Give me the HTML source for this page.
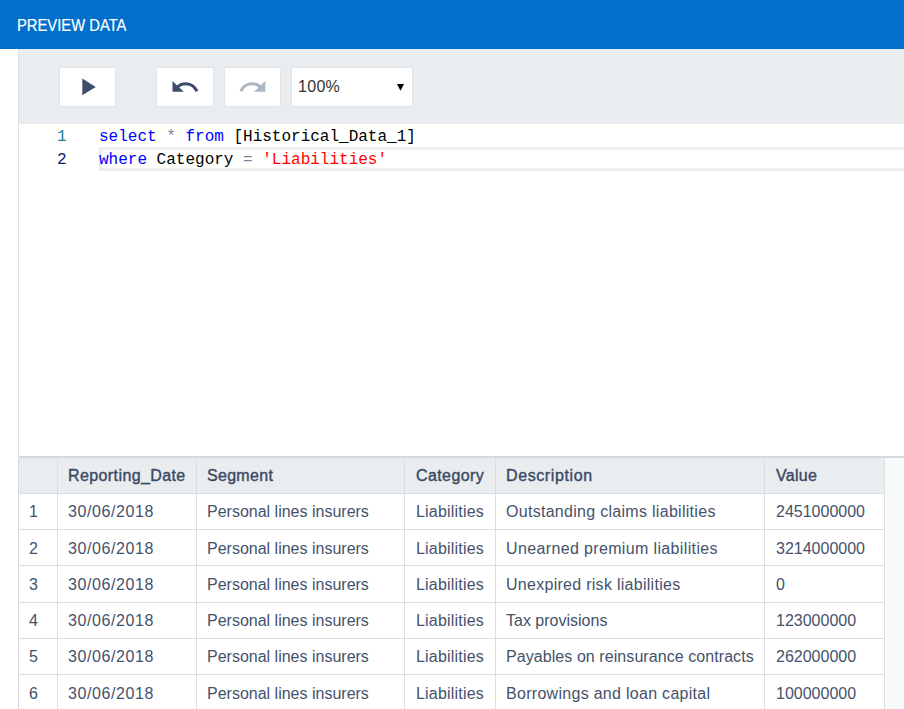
<!DOCTYPE html>
<html><head><meta charset="utf-8">
<style>
html,body{margin:0;padding:0;}
body{width:904px;height:709px;position:relative;overflow:hidden;background:#fff;font-family:"Liberation Sans",sans-serif;}
.a{position:absolute;}
#hdr{left:0;top:0;width:904px;height:49px;background:#0070cc;}
#hdrline{left:0;top:48px;width:904px;height:1px;background:#006ac4;}
#title{left:17px;top:1px;height:49px;line-height:49px;color:#fff;font-size:16px;white-space:nowrap;transform:scaleX(0.923);transform-origin:0 0;-webkit-text-stroke:0.2px #fff;}
#vline{left:18px;top:49px;width:1px;height:408px;background:#dcdfe3;}
#vline2{left:18px;top:458px;width:1px;height:251px;background:#d5d9de;}
#tb{left:19px;top:49px;width:885px;height:75px;background:#e9edf0;}
.btn{background:#fff;border:1px solid #e1e4e6;border-radius:2px;box-sizing:border-box;height:40px;top:67px;}
#ed{left:19px;top:124px;width:885px;height:332px;background:#fffffe;}
.ln{font-family:"Liberation Mono",monospace;font-size:16px;white-space:pre;line-height:23px;}
.code{font-family:"Liberation Mono",monospace;font-size:16px;white-space:pre;line-height:23px;left:99px;}
.kw{color:#0000ff;}
.op{color:#778899;}
.str{color:#ff0000;}
#curline{left:99px;top:147px;width:805px;height:24px;border:3px solid #eeeeee;border-right:none;box-sizing:border-box;}
#div{left:19px;top:456px;width:885px;height:2px;background:#d5d8dc;}
#rstrip{left:885px;top:458px;width:19px;height:251px;background:#f9fafa;}
#thead{left:19px;top:458px;width:865px;height:35px;background:#e9edf0;}
.hl{background:#dadfe5;}
.t{font-size:16px;color:#45526b;white-space:nowrap;line-height:20px;}
.th{font-weight:400;color:#3b4a64;-webkit-text-stroke:0.4px #3b4a64;}
</style></head><body>
<div class="a" id="hdr"></div>
<div class="a" id="hdrline"></div>
<div class="a" id="title">PREVIEW DATA</div>
<div class="a" id="vline"></div>
<div class="a" id="vline2"></div>
<div class="a" id="tb"></div>
<div class="a btn" style="left:59px;width:57px;"></div>
<div class="a btn" style="left:156px;width:58px;"></div>
<div class="a btn" style="left:224px;width:57px;"></div>
<div class="a btn" style="left:291px;width:122px;"></div>
<svg class="a" style="left:0;top:0" width="904" height="124">
  <polygon points="82.3,78.5 95.7,86.9 82.3,95.3" fill="#3c4c6a"/>
  <polygon points="397,84 404,84 400.5,90.8" fill="#000"/>
  <g transform="translate(169.98,72.77) scale(1.26,1.19)"><path fill="#3c4c6a" d="M12.5 8c-2.65 0-5.05.99-6.9 2.6L2 7v9h9l-3.62-3.62c1.39-1.16 3.16-1.88 5.12-1.88 3.54 0 6.55 2.310 7.6 5.5l2.37-.78C21.08 11.030 17.15 8 12.5 8z"/></g>
  <g transform="translate(237.58,72.67) scale(1.26,1.19)"><path fill="#aab6c2" d="M18.4 10.6C16.55 8.99 14.15 8 11.5 8c-4.65 0-8.58 3.03-9.96 7.22L3.9 16c1.05-3.19 4.05-5.5 7.6-5.5 1.95 0 3.73.72 5.12 1.88L13 16h9V7l-3.6 3.6z"/></g>
</svg>
<div class="a" style="left:298px;top:77px;font-size:16px;color:#333;line-height:20px;letter-spacing:0.3px;">100%</div>
<div class="a" id="ed"></div>
<div class="a" id="curline"></div>
<div class="a ln" style="left:57px;top:126px;color:#237893;">1</div>
<div class="a ln" style="left:57px;top:149px;color:#0b216f;">2</div>
<div class="a code" style="top:126px;"><span class="kw">select</span> <span class="op">*</span> <span class="kw">from</span> [Historical_Data_1]</div>
<div class="a code" style="top:149px;"><span class="kw">where</span> Category <span class="op">=</span> <span class="str">'Liabilities'</span></div>
<div class="a" id="div"></div>
<div class="a" id="rstrip"></div>
<div class="a" id="thead"></div>
<div id="grid">
<div class="a hl" style="left:19px;top:493px;width:865px;height:1px;"></div>
<div class="a hl" style="left:19px;top:529px;width:865px;height:1px;"></div>
<div class="a hl" style="left:19px;top:565px;width:865px;height:1px;"></div>
<div class="a hl" style="left:19px;top:602px;width:865px;height:1px;"></div>
<div class="a hl" style="left:19px;top:638px;width:865px;height:1px;"></div>
<div class="a hl" style="left:19px;top:674px;width:865px;height:1px;"></div>
<div class="a hl" style="left:57px;top:458px;width:1px;height:251px;"></div>
<div class="a hl" style="left:196px;top:458px;width:1px;height:251px;"></div>
<div class="a hl" style="left:404px;top:458px;width:1px;height:251px;"></div>
<div class="a hl" style="left:495px;top:458px;width:1px;height:251px;"></div>
<div class="a hl" style="left:764px;top:458px;width:1px;height:251px;"></div>
<div class="a hl" style="left:884px;top:458px;width:1px;height:251px;"></div>
<div class="a t th" style="left:68px;top:466px;letter-spacing:0.4px;">Reporting_Date</div>
<div class="a t th" style="left:207px;top:466px;letter-spacing:0.3px;">Segment</div>
<div class="a t th" style="left:416px;top:466px;letter-spacing:0.4px;">Category</div>
<div class="a t th" style="left:506px;top:466px;letter-spacing:0.6px;">Description</div>
<div class="a t th" style="left:776px;top:466px;letter-spacing:0.3px;">Value</div>
<div class="a t" style="left:29px;top:502px;">1</div>
<div class="a t" style="left:68px;top:502px;letter-spacing:0.6px;">30/06/2018</div>
<div class="a t" style="left:207px;top:502px;">Personal lines insurers</div>
<div class="a t" style="left:416px;top:502px;letter-spacing:0.2px;">Liabilities</div>
<div class="a t" style="left:506px;top:502px;letter-spacing:0.29px;">Outstanding claims liabilities</div>
<div class="a t" style="left:776px;top:502px;">2451000000</div>
<div class="a t" style="left:29px;top:539px;">2</div>
<div class="a t" style="left:68px;top:539px;letter-spacing:0.6px;">30/06/2018</div>
<div class="a t" style="left:207px;top:539px;">Personal lines insurers</div>
<div class="a t" style="left:416px;top:539px;letter-spacing:0.2px;">Liabilities</div>
<div class="a t" style="left:506px;top:539px;letter-spacing:0.36px;">Unearned premium liabilities</div>
<div class="a t" style="left:776px;top:539px;">3214000000</div>
<div class="a t" style="left:29px;top:575px;">3</div>
<div class="a t" style="left:68px;top:575px;letter-spacing:0.6px;">30/06/2018</div>
<div class="a t" style="left:207px;top:575px;">Personal lines insurers</div>
<div class="a t" style="left:416px;top:575px;letter-spacing:0.2px;">Liabilities</div>
<div class="a t" style="left:506px;top:575px;letter-spacing:0.28px;">Unexpired risk liabilities</div>
<div class="a t" style="left:776px;top:575px;">0</div>
<div class="a t" style="left:29px;top:611px;">4</div>
<div class="a t" style="left:68px;top:611px;letter-spacing:0.6px;">30/06/2018</div>
<div class="a t" style="left:207px;top:611px;">Personal lines insurers</div>
<div class="a t" style="left:416px;top:611px;letter-spacing:0.2px;">Liabilities</div>
<div class="a t" style="left:506px;top:611px;">Tax provisions</div>
<div class="a t" style="left:776px;top:611px;">123000000</div>
<div class="a t" style="left:29px;top:647px;">5</div>
<div class="a t" style="left:68px;top:647px;letter-spacing:0.6px;">30/06/2018</div>
<div class="a t" style="left:207px;top:647px;">Personal lines insurers</div>
<div class="a t" style="left:416px;top:647px;letter-spacing:0.2px;">Liabilities</div>
<div class="a t" style="left:506px;top:647px;letter-spacing:0.07px;">Payables on reinsurance contracts</div>
<div class="a t" style="left:776px;top:647px;">262000000</div>
<div class="a t" style="left:29px;top:684px;">6</div>
<div class="a t" style="left:68px;top:684px;letter-spacing:0.6px;">30/06/2018</div>
<div class="a t" style="left:207px;top:684px;">Personal lines insurers</div>
<div class="a t" style="left:416px;top:684px;letter-spacing:0.2px;">Liabilities</div>
<div class="a t" style="left:506px;top:684px;letter-spacing:0.29px;">Borrowings and loan capital</div>
<div class="a t" style="left:776px;top:684px;">100000000</div>
</div><!--/grid-->
</body></html>
